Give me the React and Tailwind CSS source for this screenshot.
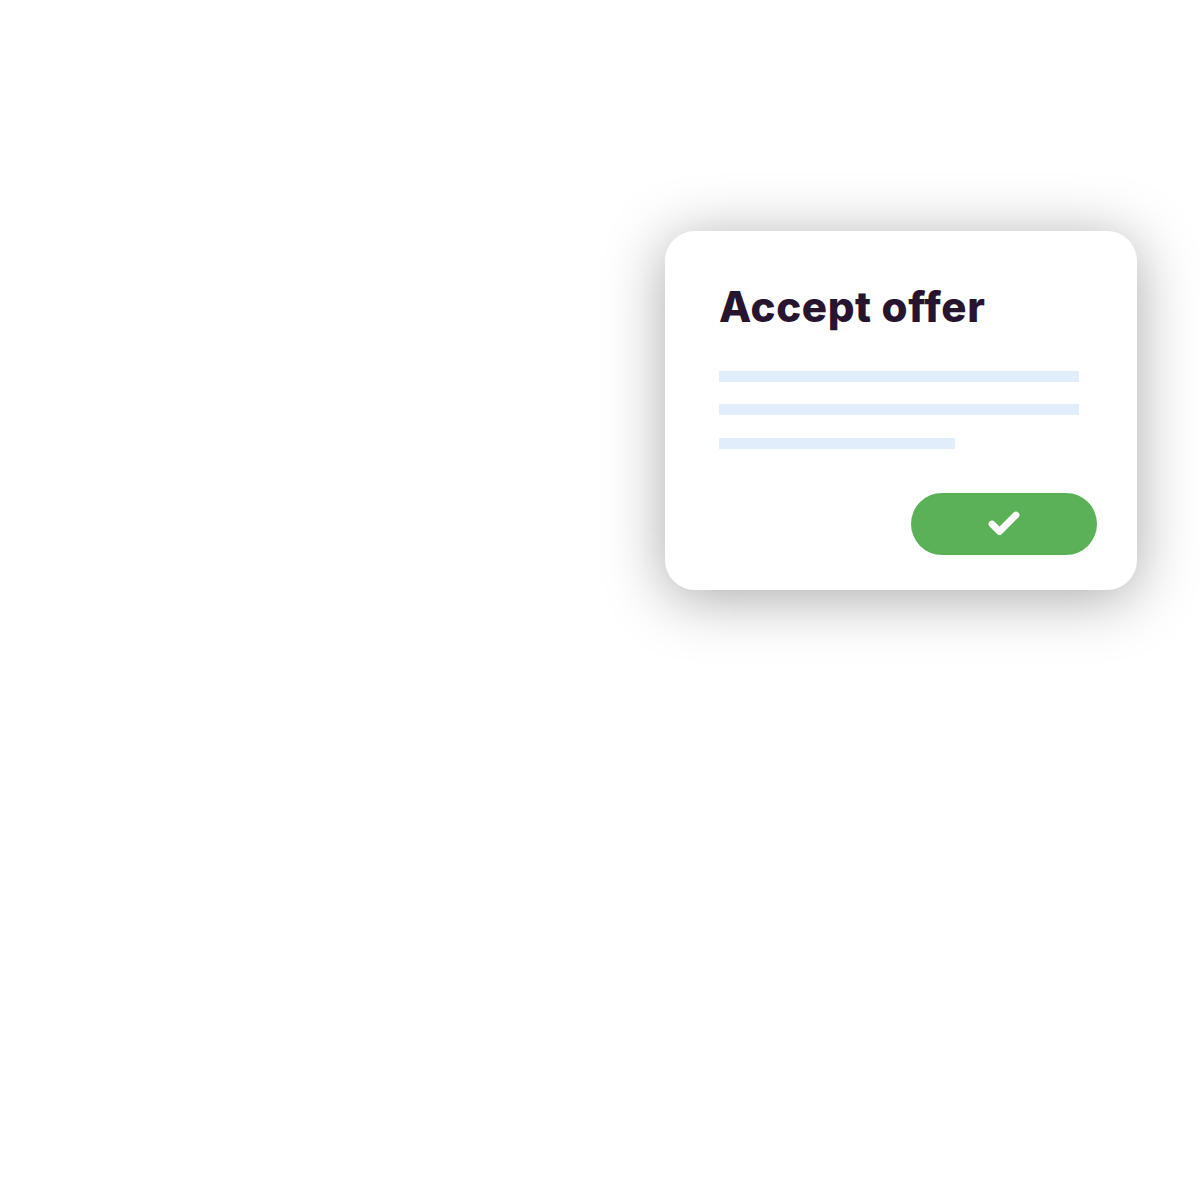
import { Check } from 'lucide-react';

function PlaceholderLine({ width, className = '' }) {
  return <div className={`h-[11px] bg-[#e1edfb] ${width} ${className}`} />;
}

export default function App() {
  return (
    <div className="min-h-[1200px] w-[1200px] bg-white pl-[665px] pt-[231px]">
      <section className="h-[359px] w-[472px] rounded-[30px] bg-white pl-[54px] pr-[40px] pt-[52px] shadow-[0_8px_60px_rgba(0,0,0,0.34)]">
        <h1 className="font-['Inter',sans-serif] text-[42px] font-extrabold leading-[48px] tracking-[0.015em] text-[#27142f]">
          Accept offer
        </h1>
        <div className="mt-[40px] flex w-[360px] flex-col">
          <PlaceholderLine width="w-[360px]" />
          <PlaceholderLine width="w-[360px]" className="mt-[22px]" />
          <PlaceholderLine width="w-[236px]" className="mt-[23px]" />
        </div>
        <div className="mt-[44px] flex justify-end">
          <button className="flex h-[62px] w-[186px] items-center justify-center rounded-full bg-[#5ab157] text-white">
            <Check size={36} strokeWidth={4.5} />
          </button>
        </div>
      </section>
    </div>
  );
}
